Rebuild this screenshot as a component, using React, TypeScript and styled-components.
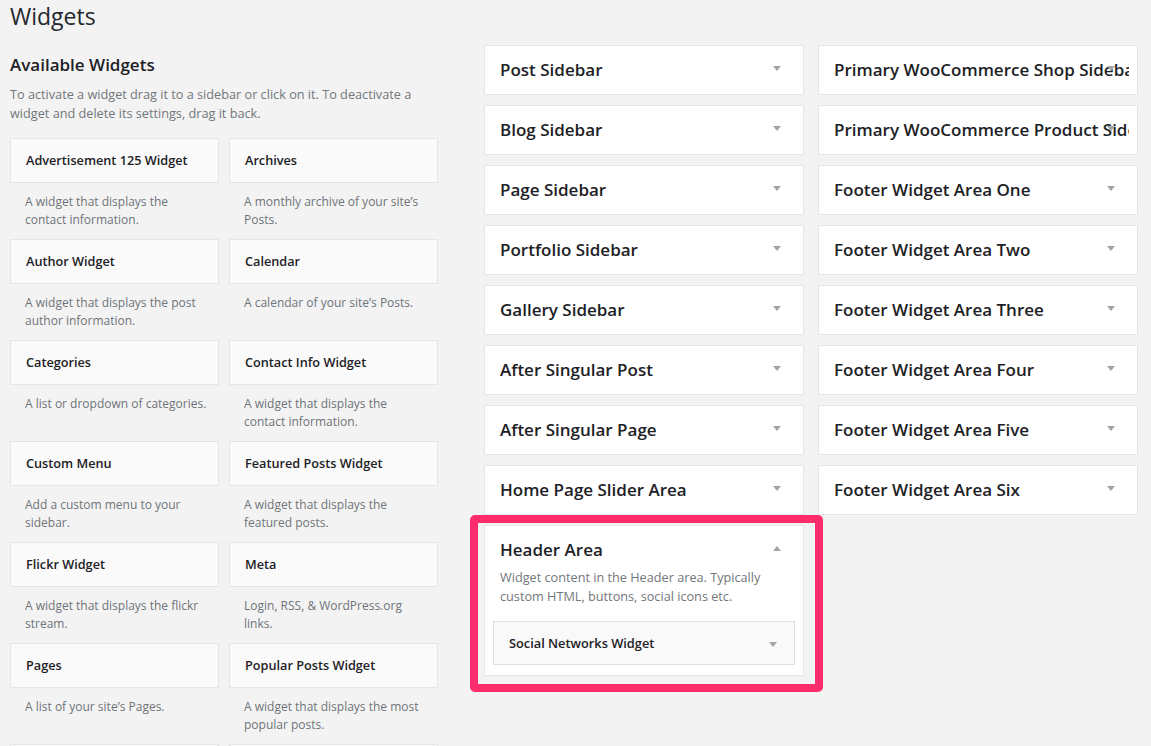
import React from "react";
import styled, { createGlobalStyle, css } from "styled-components";

const GlobalStyle = createGlobalStyle`
  html, body {
    margin: 0;
    padding: 0;
    background: #f3f3f3;
    font-family: "Open Sans", "Liberation Sans", sans-serif;
    color: #23282d;
  }
  * { box-sizing: border-box; }
`;

const Page = styled.div`
  padding: 2px 0 0 10px;
  width: 1151px;
  height: 746px;
  overflow: hidden;
`;

const Title = styled.h1`
  margin: 0;
  font-size: 23px;
  line-height: 29px;
  font-weight: 400;
  color: #23282d;
`;

const Columns = styled.div`
  display: flex;
  align-items: flex-start;
  margin-top: 14px;
`;

const LeftPane = styled.div`
  width: 429px;
  flex-shrink: 0;
  margin-right: 45px;
`;

const SectionTitle = styled.h2`
  margin: 8px 0 0;
  font-size: 17px;
  line-height: 24px;
  font-weight: 600;
  color: #1d2125;
`;

const Intro = styled.p`
  margin: 8px 0 0;
  font-size: 12.7px;
  line-height: 19px;
  color: #72777c;
`;

const WidgetGrid = styled.div`
  display: grid;
  grid-template-columns: 209px 209px;
  column-gap: 10px;
  row-gap: 10px;
  margin-top: 15px;
`;

const WidgetItem = styled.div`
  display: flex;
  flex-direction: column;
`;

const WidgetCard = styled.div`
  height: 45px;
  display: flex;
  align-items: center;
  padding: 0 15px 1px;
  background: #fafafa;
  border: 1px solid #e5e5e5;
  font-size: 12.7px;
  font-weight: 600;
  line-height: 18px;
  color: #1d2125;
`;

const WidgetDesc = styled.div`
  margin-top: 10px;
  padding: 0 12px 0 15px;
  min-height: 36px;
  font-size: 12px;
  line-height: 18px;
  color: #6f7479;
`;

const RightPane = styled.div`
  display: flex;
  gap: 14px;
  align-items: flex-start;
`;

const SidebarColumn = styled.div`
  width: 320px;
  display: flex;
  flex-direction: column;
  gap: 10px;
`;

const SidebarBox = styled.div<{ $highlight?: boolean }>`
  position: relative;
  background: #fff;
  border: 1px solid #e5e5e5;
  ${(p) =>
    p.$highlight &&
    css`
      &::after {
        content: "";
        position: absolute;
        top: -11px;
        left: -15px;
        right: -20px;
        bottom: -17px;
        border: 8px solid #fd2c6c;
        border-radius: 5px;
        pointer-events: none;
      }
    `}
`;

const SidebarHead = styled.h3<{ $open?: boolean }>`
  margin: 0 8px 0 0;
  height: ${(p) => (p.$open ? "auto" : "48px")};
  padding: ${(p) => (p.$open ? "14px 0 0 15px" : "0 0 0 15px")};
  display: flex;
  align-items: center;
  font-size: 17px;
  line-height: 20px;
  font-weight: 600;
  color: #1d2125;
  white-space: nowrap;
  overflow: hidden;
`;

const Arrow = styled.span<{ $up?: boolean; $top: number; $right: number }>`
  position: absolute;
  top: ${(p) => p.$top}px;
  right: ${(p) => p.$right}px;
  width: 0;
  height: 0;
  border-left: 4px solid transparent;
  border-right: 4px solid transparent;
  ${(p) =>
    p.$up
      ? css`border-bottom: 5px solid #a0a5aa;`
      : css`border-top: 5px solid #a0a5aa;`}
`;

const SidebarDesc = styled.p`
  margin: 8px 0 0;
  padding: 0 15px;
  font-size: 12.7px;
  line-height: 19px;
  color: #72777c;
`;

const SidebarBody = styled.div`
  padding: 15px 8px 10px;
`;

const InnerWidget = styled.div`
  position: relative;
  height: 44px;
  display: flex;
  align-items: center;
  padding: 0 15px;
  background: #f9f9f9;
  border: 1px solid #e0e0e0;
  font-size: 12.8px;
  font-weight: 600;
  color: #1d2125;
`;

const widgets: [string, string][] = [
  ["Advertisement 125 Widget", "A widget that displays the contact information."],
  ["Archives", "A monthly archive of your site’s Posts."],
  ["Author Widget", "A widget that displays the post author information."],
  ["Calendar", "A calendar of your site’s Posts."],
  ["Categories", "A list or dropdown of categories."],
  ["Contact Info Widget", "A widget that displays the contact information."],
  ["Custom Menu", "Add a custom menu to your sidebar."],
  ["Featured Posts Widget", "A widget that displays the featured posts."],
  ["Flickr Widget", "A widget that displays the flickr stream."],
  ["Meta", "Login, RSS, & WordPress.org links."],
  ["Pages", "A list of your site’s Pages."],
  ["Popular Posts Widget", "A widget that displays the most popular posts."],
  ["Recent Comments", "Your site’s most recent comments."],
  ["Recent Posts", "Your site’s most recent Posts."],
];

const leftSidebars = [
  "Post Sidebar",
  "Blog Sidebar",
  "Page Sidebar",
  "Portfolio Sidebar",
  "Gallery Sidebar",
  "After Singular Post",
  "After Singular Page",
  "Home Page Slider Area",
];

const rightSidebars = [
  "Primary WooCommerce Shop Sidebar",
  "Primary WooCommerce Product Sidebar",
  "Footer Widget Area One",
  "Footer Widget Area Two",
  "Footer Widget Area Three",
  "Footer Widget Area Four",
  "Footer Widget Area Five",
  "Footer Widget Area Six",
];

const ClosedSidebar = ({ name }: { name: string }) => (
  <SidebarBox>
    <SidebarHead>{name}</SidebarHead>
    <Arrow $top={20} $right={22} />
  </SidebarBox>
);

export default function App() {
  return (
    <>
      <GlobalStyle />
      <Page>
        <Title>Widgets</Title>
        <Columns>
          <LeftPane>
            <SectionTitle>Available Widgets</SectionTitle>
            <Intro>
              To activate a widget drag it to a sidebar or click on it. To deactivate a
              widget and delete its settings, drag it back.
            </Intro>
            <WidgetGrid>
              {widgets.map(([name, desc]) => (
                <WidgetItem key={name}>
                  <WidgetCard>{name}</WidgetCard>
                  <WidgetDesc>{desc}</WidgetDesc>
                </WidgetItem>
              ))}
            </WidgetGrid>
          </LeftPane>
          <RightPane>
            <SidebarColumn>
              {leftSidebars.map((n) => (
                <ClosedSidebar key={n} name={n} />
              ))}
              <SidebarBox $highlight>
                <SidebarHead $open>Header Area</SidebarHead>
                <Arrow $up $top={20} $right={22} />
                <SidebarDesc>
                  Widget content in the Header area. Typically custom HTML, buttons, social
                  icons etc.
                </SidebarDesc>
                <SidebarBody>
                  <InnerWidget>
                    Social Networks Widget
                    <Arrow $top={20} $right={17} />
                  </InnerWidget>
                </SidebarBody>
              </SidebarBox>
            </SidebarColumn>
            <SidebarColumn>
              {rightSidebars.map((n) => (
                <ClosedSidebar key={n} name={n} />
              ))}
            </SidebarColumn>
          </RightPane>
        </Columns>
      </Page>
    </>
  );
}
